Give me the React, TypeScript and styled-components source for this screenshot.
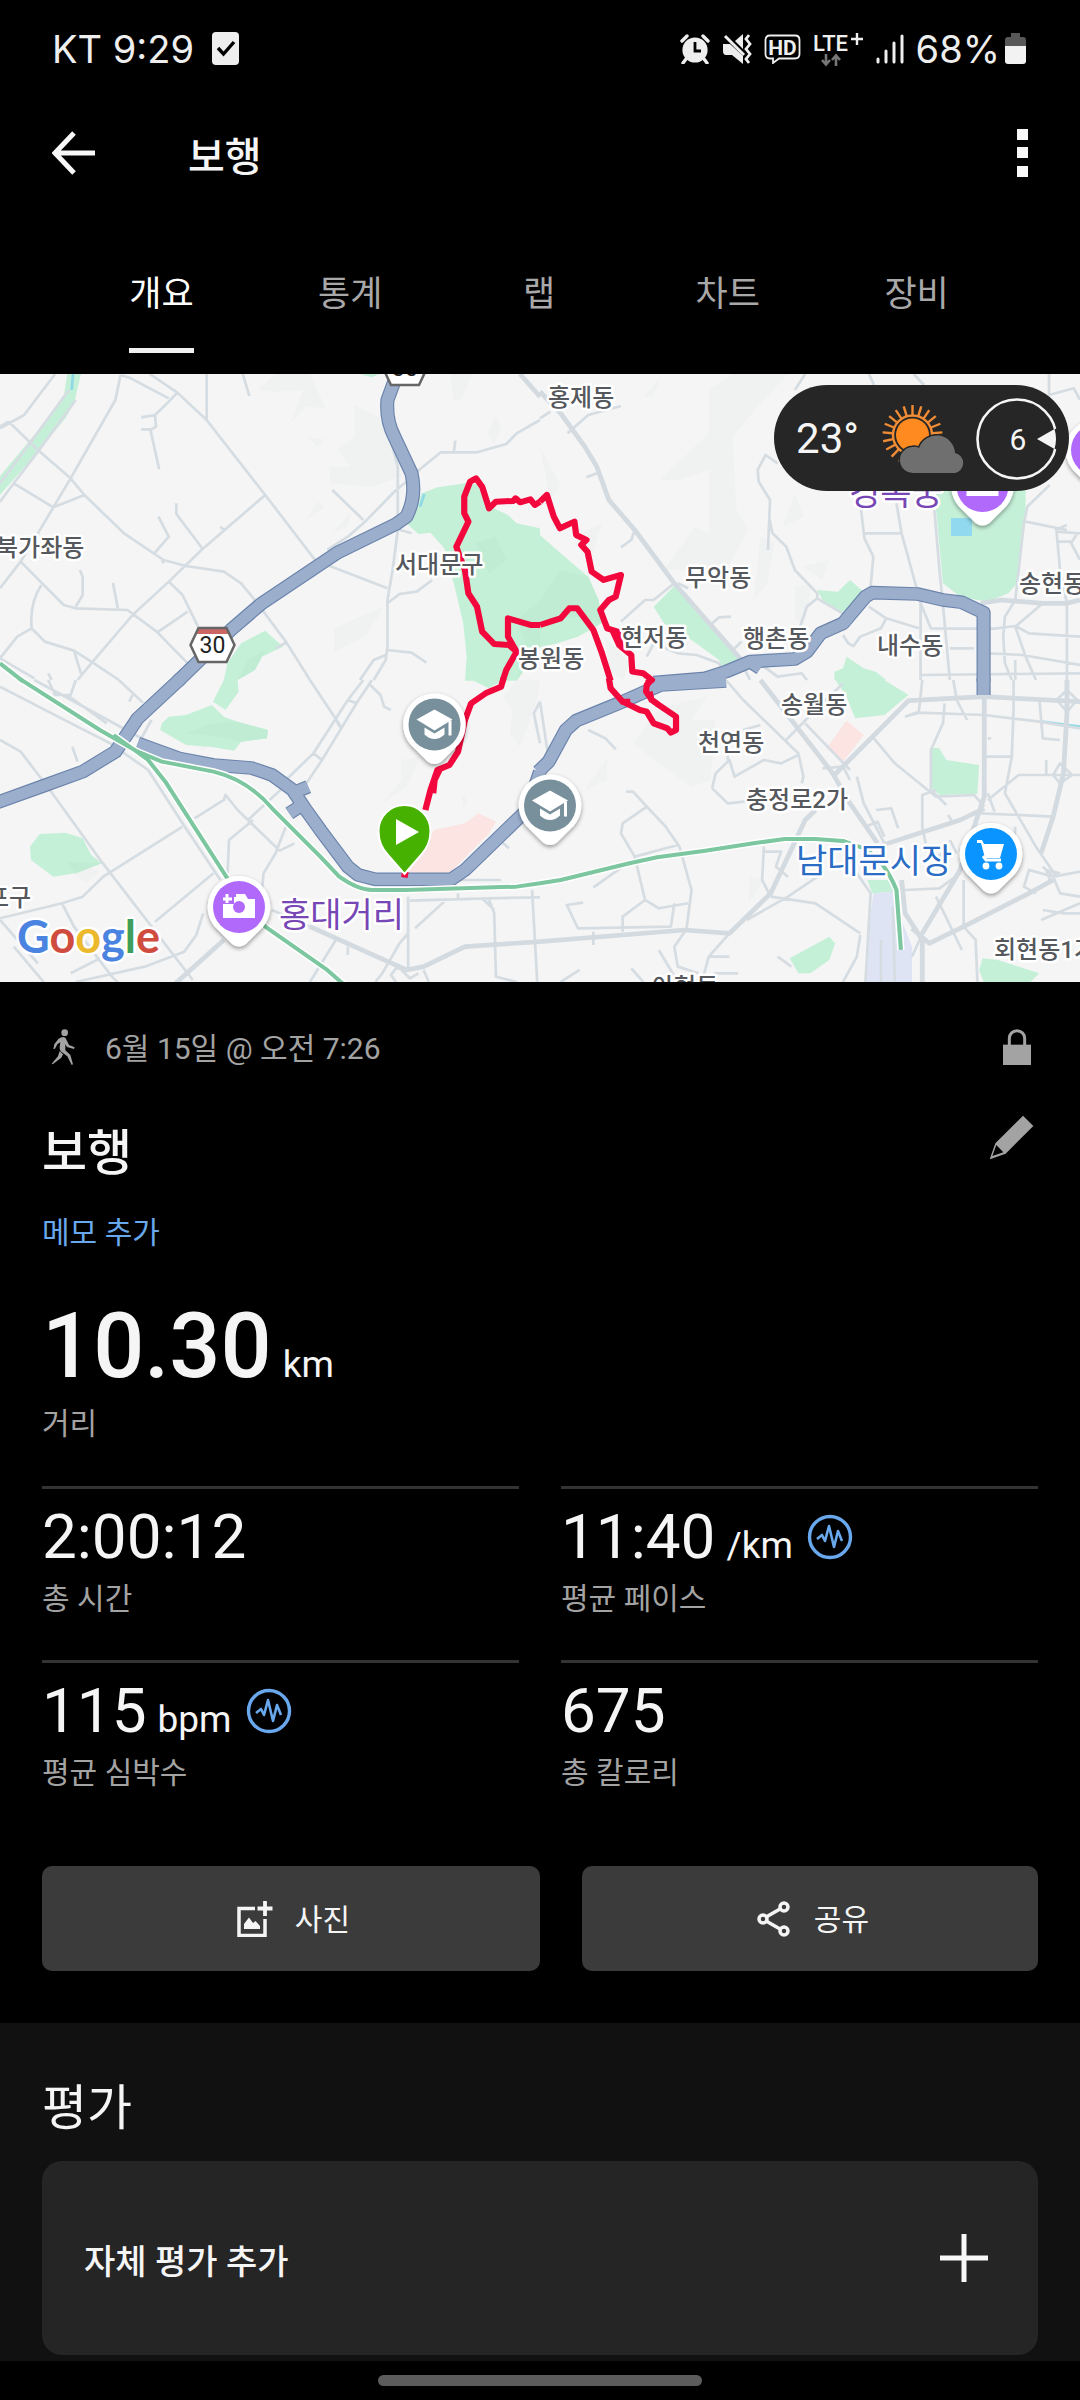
import React from "react";
import styled, { createGlobalStyle } from "styled-components";

const GlobalStyle = createGlobalStyle`
  * { box-sizing: border-box; }
  body {
    margin: 0;
    background: #000;
    color: #f5f5f5;
    font-family: Roboto, "Noto Sans CJK KR", sans-serif;
  }
  button {
    font: inherit;
    color: inherit;
    background: none;
    border: 0;
    padding: 0;
    cursor: pointer;
  }
  svg { display: block; flex: none; }
  h1, h2, p, dl, dd, dt { margin: 0; font-weight: 400; }
`;

/* ---------- Page chrome ---------- */

const Page = styled.div`
  display: flex;
  flex-direction: column;
  min-height: 100vh;
`;

const StatusBar = styled.div`
  display: flex;
  justify-content: space-between;
  align-items: center;
  height: 97px;
  padding: 0 54px 0 52px;
  color: #eee;
  font-family: Inter, Roboto, sans-serif;
  font-size: 38px;
  line-height: 48px;
`;

const StatusGroup = styled.div<{ $gap: number }>`
  display: flex;
  align-items: center;
  gap: ${(p) => p.$gap}px;
`;

const Battery = styled.span`
  display: flex;
  align-items: center;
  gap: 5px;
`;

const AppBar = styled.header`
  display: flex;
  align-items: center;
  height: 112px;
  padding: 0 52px;
`;

const AppTitle = styled.h1`
  flex: 1;
  margin-left: 92px;
  padding-top: 9px;
  font-size: 40px;
  font-weight: 500;
  line-height: 48px;
`;

const Tabs = styled.nav`
  display: flex;
  padding: 66px 69px 21px 67px;
`;

const Tab = styled.button<{ $active?: boolean }>`
  flex: 1;
  display: flex;
  justify-content: center;
  font-size: 35px;
  line-height: 40px;
  color: ${(p) => (p.$active ? "#fff" : "#a8a8a8")};
`;

const TabLabel = styled.span<{ $active?: boolean }>`
  padding-bottom: 33px;
  border-bottom: 5px solid ${(p) => (p.$active ? "#f0f0f0" : "transparent")};
`;

/* ---------- Map ---------- */

const MapFrame = styled.section`
  position: relative;
  height: 608px;
  overflow: hidden;
  background: #f5f5f5;
`;

const MapCanvas = styled.svg`
  width: 100%;
  height: 100%;
`;

const Place = styled.text`
  font-family: Roboto, "Noto Sans CJK KR", sans-serif;
  font-size: 24px;
  font-weight: 500;
  fill: #55585c;
  stroke: #fff;
  stroke-width: 5px;
  stroke-linejoin: round;
  paint-order: stroke;
`;

const PoiName = styled(Place)<{ $color: string }>`
  font-size: 34px;
  font-weight: 400;
  fill: ${(p) => p.$color};
`;

const ShieldText = styled.text`
  font-family: Roboto, sans-serif;
  font-size: 23px;
  fill: #222;
  text-anchor: middle;
`;

const GoogleMark = styled.text`
  font-family: Lato, sans-serif;
  font-size: 45px;
  font-weight: 700;
  stroke: #fff;
  stroke-width: 5px;
  stroke-linejoin: round;
  paint-order: stroke;
`;

const Weather = styled.div`
  position: absolute;
  top: 11px;
  right: 11px;
  display: flex;
  align-items: center;
  height: 106px;
  padding: 2px 10px 0 22px;
  border-radius: 53px;
  background: #262626;
  color: #f5f5f5;
  font-size: 42px;
  line-height: 48px;
`;

const SkyIcon = styled.svg`
  margin: 0 7px 0 19px;
`;

const WindText = styled.text`
  font-family: Roboto, sans-serif;
  font-size: 30px;
  fill: #f5f5f5;
  text-anchor: middle;
`;

/* ---------- Activity summary ---------- */

const Summary = styled.main`
  padding: 46px 42px 52px;
`;

const MetaRow = styled.div`
  display: flex;
  align-items: center;
  height: 40px;
  color: #a3a3a3;
`;

const DateText = styled.p`
  flex: 1;
  margin-left: 21px;
  padding-top: 2px;
  font-size: 30px;
  line-height: 40px;
`;

const TitleRow = styled.div`
  display: flex;
  justify-content: space-between;
  align-items: flex-start;
  margin-top: 47px;
  color: #a3a3a3;
`;

const Title = styled.h2`
  font-size: 49px;
  font-weight: 500;
  line-height: 78px;
  color: #f5f5f5;
`;

const NoteLink = styled.a`
  display: block;
  margin-top: 20px;
  font-size: 30px;
  line-height: 40px;
  color: #69a8ec;
  text-decoration: none;
`;

const Distance = styled.dl`
  display: flex;
  flex-direction: column-reverse;
  padding: 41px 0 42px;
`;

const StatGrid = styled.dl`
  display: grid;
  grid-template-columns: 1fr 1fr;
  column-gap: 42px;
`;

const StatCell = styled.div`
  display: flex;
  flex-direction: column-reverse;
  justify-content: flex-end;
  padding: 10px 0 41px;
  border-top: 3px solid #333;
`;

const StatValue = styled.dd<{ $large?: boolean }>`
  display: flex;
  align-items: center;
  gap: 14px;
  font-size: ${(p) => (p.$large ? 90 : 62)}px;
  font-weight: ${(p) => (p.$large ? 500 : 400)};
  line-height: ${(p) => (p.$large ? 106 : 76)}px;
`;

const Unit = styled.span`
  margin-left: 11px;
  font-size: 37px;
  font-weight: 400;
  line-height: 40px;
`;

const StatLabel = styled.dt`
  margin-top: 4px;
  font-size: 30px;
  line-height: 40px;
  color: #a3a3a3;
`;

const Actions = styled.div`
  display: flex;
  gap: 42px;
  margin-top: 32px;
`;

const ActionButton = styled.button<{ $grow: number }>`
  flex: ${(p) => p.$grow} 1 0;
  display: flex;
  justify-content: center;
  align-items: center;
  gap: 22px;
  height: 105px;
  padding: 0 0 0 5px;
  border-radius: 10px;
  background: #3b3b3b;
  font-size: 30px;
  line-height: 40px;
`;

const ActionLabel = styled.span`
  padding-top: 3px;
`;

/* ---------- Rating ---------- */

const Rating = styled.section`
  flex: 1;
  padding: 54px 42px 6px;
  background: #111;
`;

const RatingTitle = styled.h2`
  font-size: 49px;
  line-height: 64px;
`;

const RatingCard = styled.button`
  display: flex;
  justify-content: space-between;
  align-items: center;
  width: 100%;
  height: 194px;
  margin-top: 20px;
  padding: 0 42px;
  border-radius: 20px;
  background: #252525;
  font-size: 34px;
  font-weight: 500;
  line-height: 48px;
`;

const RatingPrompt = styled.span`
  padding-top: 7px;
`;

const GestureBar = styled.div`
  display: flex;
  justify-content: center;
  height: 39px;
  padding-top: 14px;
`;

const GestureHandle = styled.span`
  width: 30%;
  height: 11px;
  border-radius: 6px;
  background: #5c5c5c;
`;

/* ---------- Map data: four tiles, each drawn on a 1568 x 930 grid ---------- */

type Tile = {
  at: [number, number];
  hills: string;
  parks: string;
  parkShade?: string;
  pink?: string;
  station?: string;
  water?: string;
  streets: string;
  avenues: string;
  highway: string;
  rail: string;
  route: string;
};

const tiles: Tile[] = [
  {
    at: [0, -4],
    hills:
      "M750 60L800 12H900L945 115L890 110L845 160L880 60L800 65ZM1030 105L1100 140L1150 230L1165 320L1080 350L960 340L955 290L1020 290L980 240L1030 200ZM890 450L920 395L942 410ZM970 775L1115 710L1060 800L970 845ZM1310 12H1370L1340 90L1315 90ZM1440 135L1455 180L1435 220L1415 190ZM895 203L942 208L920 230ZM965 490L1020 425L1010 470Z",
    parks:
      "M195 12H235L215 100L190 145L110 245L0 375V318L85 213L150 130L185 80ZM1180 460L1225 370L1270 352L1350 340L1400 345L1425 410L1475 435L1500 460L1568 475V832L1500 932H1350L1355 860L1345 760L1320 650L1290 535L1250 488L1215 492ZM650 930L660 880L700 820L770 782L822 830L760 860L740 900L690 930ZM1045 12H1100L1080 22Z",
    parkShade:
      "M1500 932L1530 830L1500 750L1568 690V832ZM1380 520L1440 500L1470 570L1420 610ZM690 930L720 870L770 840L760 862L740 900Z",
    water: "M212 12L208 60M1232 372L1220 410",
    streets:
      "M160 12L70 135L0 175M350 15L335 90L205 325L155 412L110 490L60 575L0 655M25 155L110 240L205 325L245 375L360 490L475 570L540 588L650 605L700 640L740 690L830 815L900 930M350 15L380 25L490 85M435 12L515 68L600 150L770 375L915 570M515 68L490 95L450 135L410 142M450 135L453 170L440 178H410M437 180L462 298M600 12V150M705 12L724 78M40 340L155 412L245 375M770 375L585 540L490 635L385 735L265 880L225 930M460 440L490 500L450 548M512 400V432L587 535M60 575L185 705L220 715L370 720L455 785L545 880M232 600L240 620V675L220 710M328 638L342 715M490 635L530 675L575 770M545 725L460 785M120 645Q85 700 92 775L50 800L0 865M92 775L130 815L215 842L265 875L345 930M215 842L235 910M1568 150L1500 190L1470 222L1385 247H1280L1205 310M1322 212L1318 245M1180 335L1150 360L1060 455L1010 500L950 540M1130 190L1155 290V480L1140 600L1125 690V830L1120 870L1085 930M965 360L1055 450M950 585L1125 655M1155 478L1195 490M1125 700L1160 672L1210 665L1255 630M1125 840L1195 848L1238 878M1120 855L1085 870L1045 930M800 835L835 815M640 470L650 480M470 570L475 580M0 865L100 925M140 910L150 930M25 155L0 170M0 340L90 215L200 60M0 395L40 340L110 245L220 90",
    avenues: "M1510 12L1568 80",
    highway:
      "M1150 20L1125 90Q1120 150 1145 200L1195 310Q1210 380 1180 440L1150 462L980 548L760 700L670 780L515 935",
    rail: "M0 880L68 935",
    route:
      "M1460 932L1470 900L1500 845L1475 800V745L1540 765L1568 765M1500 845L1478 825L1435 822L1400 785L1385 710L1360 670L1350 600L1335 560L1325 530L1360 455L1348 430V380L1365 335L1382 325L1400 350L1420 415L1440 395L1490 393L1497 385L1510 397L1540 388L1553 405L1568 395",
  },
  {
    at: [540, -4],
    hills:
      "M350 330L490 190V60L560 12H720L640 100L560 200L570 420L605 480L540 600L360 600L450 470L490 490V300L400 330ZM740 370L765 440L705 470ZM760 590L840 570L820 630ZM300 80L350 20L330 80ZM0 230L60 345L30 390ZM100 500L180 460L150 560ZM640 500L680 520L660 640L620 690ZM740 650L790 640L770 760L740 750ZM190 800L260 880L240 930L200 900Z",
    parks:
      "M0 495L60 550L140 620L170 690L180 760L110 800L50 820L0 832ZM390 648L585 870L535 905L520 870L440 810L360 760L330 710ZM805 660L865 665L900 630L940 665L890 735L820 690ZM1150 350H1410V450L1385 640L1360 670L1300 695L1220 680L1170 640L1150 420ZM855 930V905L880 895L890 860L940 895L975 905L1005 930Z",
    parkShade: "M0 690L60 600L140 620L170 690L180 760L110 740L0 750Z",
    streets:
      "M235 108L140 135L80 190M0 145L30 125M165 310L135 322M275 480L265 510L235 532M400 640L430 655M390 640L330 690H305L235 755M310 860L330 820L400 850L455 855L520 880L535 910M500 760L520 742L555 740M770 12L740 60M690 280L655 255L632 300L635 335L668 390L662 540M665 440L675 490L715 530L740 600L805 670V685L885 735M805 685L775 710L755 770M955 12L970 45M1085 12L1115 45M1478 12V75L1550 55L1568 90M930 400L942 505L968 560L960 650M1035 400L1050 490L1095 660L1105 700V930M942 490H1050M1145 420L1160 600L1175 760L1190 930M1105 700L1135 775L1210 776H1320L1380 768L1420 790L1568 800M955 710L1005 745L1100 775M1005 745L990 775L930 800L910 828L895 820L880 795M1190 835H1260M1105 915L1568 910M1305 850L1400 855L1568 885M1480 345L1415 410L1405 460L1380 690L1350 740L1345 800L1350 880L1370 930M1410 455L1530 480M1568 490L1500 485L1510 600L1530 700V930M1500 515H1545L1560 490M1540 515L1568 570M1460 700L1380 770L1410 860L1440 930M585 880L610 930M650 890L690 920L760 910L775 930M560 840L585 815M1495 480L1530 465M1380 870V930",
    avenues:
      "M0 65L60 130L130 230L165 290L200 390L275 480L390 640L585 870M1280 700L1340 690L1460 700H1530L1568 690",
    highway:
      "M330 938L480 925L540 905L610 875L740 867L775 845L815 790L880 760L945 680L965 668L1095 672L1170 690L1225 697L1288 728V935M610 875L640 895M880 760L888 772",
    rail: "",
    route:
      "M0 395L20 375L40 440L58 475L100 455L105 495L135 510L120 525L138 545L150 605L185 630L235 615L220 680L200 690L175 720L195 775L225 785L235 830L265 855L268 905L300 910L325 930L310 940M210 780L232 830M0 765L30 755L60 745L85 715H108L155 780L180 850L205 932",
  },
  {
    at: [0, 306],
    hills:
      "M1165 240L1220 230L1180 320L1110 370L1165 300ZM1460 50L1500 0H1568L1560 60L1510 200L1480 160L1490 90ZM190 560L250 555L290 575L250 610ZM1340 340L1360 370L1345 380ZM570 200L620 190L590 210Z",
    parks:
      "M470 130L490 110L540 105L615 75L650 110L690 125L778 150L775 175L700 185L680 212L610 200L540 195L490 165L465 150ZM650 0H690L693 35L655 90L618 65ZM87 500L115 462L190 458L240 475L265 525L295 550L220 580L155 590L90 540ZM1370 0H1460L1420 25Z",
    parkShade:
      "M540 160L615 130L690 125L778 150L775 175L700 185L640 170ZM190 545L295 550L220 580Z",
    pink: "M1180 590L1260 450L1350 430L1390 400L1440 425L1420 460L1300 585Z",
    streets:
      "M0 180L60 215L145 330L295 545L455 760L560 900M345 0L415 68M385 45L375 65M210 200L225 245M0 20L150 100L320 190L430 270L530 430L640 600M140 0L160 45L205 45L220 0M100 0L420 180M195 45L310 130M440 120L405 185M900 0L990 140M1055 0L1010 60L910 220L830 300M1080 0L1035 70L935 240L890 310M1010 60L1035 70M975 120L990 145M910 220L935 240M1075 15L1105 45L1115 80L1135 90M565 415L650 360L655 345L690 390L812 512L855 490M735 420L665 480L660 600M825 320L720 420M830 440L800 520L765 580L760 640M530 440L300 590L240 650L180 670L0 715M180 670L215 740L325 890L345 910M40 800L130 910M620 580L450 725M205 880L300 830L330 810M0 720L110 850M220 906L420 860L535 815L570 765L590 700M1185 650V870M1205 745L1290 665M1190 662L1420 655L1568 652M1330 640V660M1420 660L1435 700L1440 890L1500 906M1545 630L1560 906M1185 870L1150 865L1135 885L1150 906M975 780L900 906M1185 760L1160 790L1110 880L1090 906M1010 800V825M1230 870L1245 906M1335 600H1455M1455 485L1478 505M1165 870L1190 895L1215 880M1400 655L1435 690M790 690L900 740M1568 65L1550 100L1568 190",
    avenues: "M650 780L510 910M900 740L1180 870L1230 860L1350 800L1568 785",
    highway:
      "M-10 368L125 318L240 275L335 215L400 115L525 -5M400 190L520 235L620 255L730 264L790 285L850 330L885 385L930 450L1010 560L1040 585L1090 598H1310L1350 570L1530 390L1568 275M860 335L895 320M870 380L840 400",
    rail:
      "M55 -5L290 150L400 215L470 245L620 275Q720 300 790 385L930 530L985 590Q1040 630 1080 630H1180L1500 620L1568 610M330 165L430 240L480 305L660 595L770 740L950 870L1000 915",
    route:
      "M1166 582L1185 585M1235 390L1250 330L1270 270L1305 255L1330 215L1350 120L1368 70L1410 40L1455 20L1462 -5M1258 340L1262 300L1280 262",
  },
  {
    at: [540, 306],
    hills:
      "M270 190L355 80L485 50L440 120L510 120L495 300L440 320L340 245ZM130 330L195 235V300ZM610 590L650 600L605 670Z",
    parks:
      "M858 0H1000L1070 45L1000 105L915 115L890 50ZM1135 205L1158 203L1180 240L1275 255L1270 342L1160 345L1137 325ZM950 600H1015L1030 635L965 640ZM725 835L840 770L857 790L840 840L785 880L750 880ZM1285 835L1330 840L1450 880L1420 910H1290L1275 870Z",
    pink: "M890 122L940 165L880 245L832 205Z",
    station: "M968 640L1025 635L1050 720L1080 800V910H945L955 740Z",
    water: "M1455 125L1568 140",
    streets:
      "M540 0L590 60L710 180L750 220L765 290L760 310M710 185L800 90L880 10M770 130L900 270M920 290L940 370L1000 490M965 170L1030 250L1150 350L1260 345L1290 380M1110 0L1100 95L1060 110M1060 110L1100 98L1290 105L1450 125L1568 145M1175 70L1170 130L1135 210V330L1180 375M1200 0L1210 60L1240 120M1375 0V90L1370 230H1295M1450 60L1460 175L1510 180M1300 175H1310M1370 230L1350 340L1440 500L1500 590M1568 285H1390L1300 360M1280 400L1490 410M1110 440V345L1150 330M250 335H270L310 380L240 430L235 460L275 530L305 660L345 685L430 670M310 380L365 440L405 500L440 630L425 750M275 530L400 495M305 660L240 710V755M155 622L240 560M125 668L78 675L110 745L380 740L390 670M650 500L645 600L665 640M650 515H700L685 560L720 590M550 760L490 830L470 906M420 755L390 800L400 860L460 880M670 650L800 670L930 760M600 720L720 650L820 580M930 765L920 830L880 906M920 580L960 640L945 906M990 780V906M1025 680L1030 906M1060 630L1160 625L1220 580M1150 650L1225 810M1230 600V740L1265 780L1270 906M1490 590L1568 575M1490 590L1420 570L1405 620L1440 640M1490 590L1510 640L1568 650M1490 590L1460 560M1480 600L1470 570L1510 580M1455 720L1568 670M1460 690L1520 700L1568 700M500 325L510 280L550 240L565 290L650 240L700 250L750 225M500 325L545 370L640 360M545 240V210M590 150L640 135M945 440L980 425L1000 470M975 390L1020 385L1040 445M140 150L190 175L220 208M265 865L300 906M345 810L400 906M490 830L550 830M505 880H575M690 830L730 860M1185 405L1200 430M1110 440L1120 490M1470 240V285M1380 440L1375 540L1360 550M1510 250L1545 285L1510 310L1490 285ZM1500 60L1530 30L1560 60L1530 95ZM0 65L25 235M60 906L115 870M155 755V795M820 265L880 260L900 300M1120 740L1080 830M1300 340L1320 395M1160 520L1170 560M1190 480L1210 520",
    avenues:
      "M640 0L850 280L900 370L980 490M850 290L1070 62L1290 50L1568 65M1290 50V350L1270 410L1220 570L1110 760M1530 0V100L1520 280L1490 410L1455 520M1290 385L1220 420L980 500M0 785L420 750L550 760L670 640L770 420L800 390M1050 600L1060 700L1110 780V906M1080 745L1130 790L1230 740L1420 640L1490 600",
    highway:
      "M-5 275L25 245L75 150L105 122L240 65L350 15L540 3M1288 -5V45",
    rail:
      "M0 610L60 600L260 550L340 532L480 512L620 490L710 477H800L880 483L940 505Q1000 540 1035 630L1048 810",
    route:
      "M325 -3L310 15L308 35L325 60L345 75L395 110V150L380 158L370 145L330 130L310 95L290 90L240 65L205 25L200 -5M318 35L325 65M235 65H262",
  },
];

const tileTransform = ([x, y]: [number, number]) =>
  `translate(${x} ${y}) scale(0.3444 0.3333)`;

type Stroke = { color: string; width: number };

function LineLayer({ pick, color, width }: { pick: (t: Tile) => string | undefined } & Stroke) {
  return (
    <g fill="none" stroke={color} strokeWidth={width} strokeLinejoin="round">
      {tiles.map((t) => (
        <path key={t.at.join()} transform={tileTransform(t.at)} d={pick(t) || ""} />
      ))}
    </g>
  );
}

function AreaLayer({ pick, color }: { pick: (t: Tile) => string | undefined; color: string }) {
  return (
    <g fill={color}>
      {tiles.map((t) => (
        <path key={t.at.join()} transform={tileTransform(t.at)} d={pick(t) || ""} />
      ))}
    </g>
  );
}

const places: [string, number, number][] = [
  ["홍제동", 548, 32],
  ["북가좌동", -4, 182],
  ["서대문구", 395, 199],
  ["무악동", 685, 212],
  ["현저동", 621, 272],
  ["봉원동", 518, 293],
  ["행촌동", 743, 273],
  ["내수동", 877, 280],
  ["송현동", 1019, 218],
  ["송월동", 781, 339],
  ["천연동", 698, 377],
  ["충정로2가", 746, 434],
  ["회현동1가", 994, 584],
  ["아현동", 652, 621],
  ["포구", -13, 532],
];

function Pin({ x, y, color, children }: { x: number; y: number; color: string; children?: React.ReactNode }) {
  return (
    <g transform={`translate(${x} ${y})`}>
      <path
        d="M0 -31A31 31 0 0 1 24 20L7 37Q0 42 -7 37L-24 20A31 31 0 0 1 0 -31Z"
        fill="#fff"
        filter="url(#pinShadow)"
      />
      <circle r="26" fill={color} />
      {children}
    </g>
  );
}

const SchoolGlyph = () => (
  <g fill="#fff">
    <path d="M0 -15L18 -5L0 6L-18 -5Z" />
    <path d="M-10 3L0 9L10 3V10Q0 19 -10 10Z" />
    <path d="M14 -4H17V11H14Z" />
  </g>
);

const CameraGlyph = () => (
  <g>
    <path d="M-3 -13H6L9 -8H16V11H-16V-3H-5V-10H-3Z" fill="#fff" />
    <circle cy="0" r="6" fill="#b069fb" />
    <path d="M-12 -13V-4M-16 -8H-7" stroke="#fff" strokeWidth="3" />
  </g>
);

const CartGlyph = () => (
  <g fill="#fff">
    <path d="M-14 -14H-9L-7 -10H13L9 4H-6L-10 -11H-14Z" />
    <path d="M-8 2L-5 6H10" fill="none" stroke="#fff" strokeWidth="3" />
    <circle cx="-5" cy="12" r="3.4" />
    <circle cx="8" cy="12" r="3.4" />
  </g>
);

const RouteShield = ({ x, y }: { x: number; y: number }) => (
  <g transform={`translate(${x} ${y})`}>
    <path d="M-14 -17H14L22 0L14 17H-14L-22 0Z" fill="#fff" />
    <path d="M-14 -17H14L17 -11H-17Z" fill="#cc6663" />
    <path d="M-14 -17H14L22 0L14 17H-14L-22 0Z" fill="none" stroke="#666" strokeWidth="2.5" />
    <ShieldText x="0" y="8">30</ShieldText>
  </g>
);

function RouteMap() {
  return (
    <MapCanvas viewBox="0 0 1080 608" preserveAspectRatio="xMidYMid slice" role="img" aria-label="활동 경로 지도">
      <defs>
        <filter id="pinShadow" x="-30%" y="-30%" width="160%" height="160%">
          <feDropShadow dx="0" dy="2" stdDeviation="2" floodOpacity="0.4" />
        </filter>
      </defs>
      <rect width="1080" height="608" fill="#f5f5f5" />
      <AreaLayer pick={(t) => t.hills} color="#f0f1f1" />
      <AreaLayer pick={(t) => t.parks} color="#c5f0d8" />
      <AreaLayer pick={(t) => t.parkShade} color="#bfecd2" />
      <AreaLayer pick={(t) => t.pink} color="#fbe4e2" />
      <AreaLayer pick={(t) => t.station} color="#dee4f4" />
      <LineLayer pick={(t) => t.water} color="#8fd9e6" width={8} />
      <rect x="951" y="144" width="21" height="18" fill="#91d9ee" />
      <LineLayer pick={(t) => t.streets} color="#d6dde2" width={8} />
      <LineLayer pick={(t) => t.avenues} color="#d3dae0" width={14} />
      <LineLayer pick={(t) => t.highway} color="#6c84ac" width={41} />
      <LineLayer pick={(t) => t.highway} color="#9bafcd" width={34} />
      <LineLayer pick={(t) => t.rail} color="#fff" width={21} />
      <LineLayer pick={(t) => t.rail} color="#7dc7a0" width={12} />
      <LineLayer pick={(t) => t.route} color="#f2083c" width={18} />

      <RouteShield x={212.5} y={271} />
      <RouteShield x={405} y={-6} />

      {places.map(([name, x, y]) => (
        <Place key={name} x={x} y={y}>{name}</Place>
      ))}
      <PoiName $color="#7747b5" x="849" y="131">경복궁</PoiName>
      <PoiName $color="#7747b5" x="279" y="553">홍대거리</PoiName>
      <PoiName $color="#2b6cc4" x="796" y="499">남대문시장</PoiName>

      <Pin x={434.5} y={350.5} color="#78909c"><SchoolGlyph /></Pin>
      <Pin x={550} y={431.5} color="#78909c"><SchoolGlyph /></Pin>
      <Pin x={991} y={480} color="#0a94ff"><CartGlyph /></Pin>
      <Pin x={239} y={533} color="#b069fb"><CameraGlyph /></Pin>
      <Pin x={982.5} y={112} color="#b069fb"><rect x="-16" y="-8" width="32" height="18" fill="#fff" /></Pin>
      <Pin x={1097} y={76} color="#b069fb" />

      <path
        d="M404.500 431A26 26 0 0 1 430.500 457Q430.500 471 421 481L404.500 500L388 481Q378.500 471 378.500 457A26 26 0 0 1 404.500 431Z"
        fill="#46b100"
        stroke="#fff"
        strokeWidth="2"
      />
      <path d="M396 445L419 458L396 471Z" fill="#fff" />

      <GoogleMark x="17" y="579">
        <tspan fill="#4a84e0">G</tspan>
        <tspan fill="#d04c3e">o</tspan>
        <tspan fill="#ecb92d">o</tspan>
        <tspan fill="#4a84e0">g</tspan>
        <tspan fill="#3f9f58">l</tspan>
        <tspan fill="#d04c3e">e</tspan>
      </GoogleMark>
    </MapCanvas>
  );
}

function WeatherBadge() {
  const rays = Array.from({ length: 16 }, (_, i) => 100 + i * 17);
  return (
    <Weather>
      <span>23°</span>
      <SkyIcon width="90" height="82" viewBox="878 397 90 82" aria-hidden="true">
        <g stroke="#f08c35" strokeWidth="2.4">
          {rays.map((deg) => {
            const a = (deg * Math.PI) / 180;
            const c = Math.cos(a);
            const s = Math.sin(a);
            return <line key={deg} x1={912.5 + 20 * c} y1={434 + 20 * s} x2={912.5 + 30 * c} y2={434 + 30 * s} />;
          })}
        </g>
        <circle cx="912.5" cy="434" r="19.5" fill="#262626" stroke="#f08c35" strokeWidth="2.4" />
        <circle cx="912.5" cy="434" r="16.5" fill="#ff8a1f" />
        <path
          d="M914 472A13 13 0 0 1 912 446Q916 445 919 447A18.500 18.500 0 0 1 955 452A10.200 10.200 0 0 1 955 472Z"
          fill="#6f6f6f"
          stroke="#262626"
          strokeWidth="3"
          paintOrder="stroke"
        />
      </SkyIcon>
      <svg width="84" height="84" viewBox="-42 -42 84 84" role="img" aria-label="풍속 6">
        <circle r="39.500" fill="none" stroke="#f5f5f5" strokeWidth="2.6" />
        <path d="M20 0L42 -12V12Z" fill="#262626" />
        <path d="M20 0L37.500 -10Q40.500 0 37.500 10Z" fill="#f5f5f5" />
        <WindText x="1" y="11">6</WindText>
      </svg>
    </Weather>
  );
}

/* ---------- Icons ---------- */

const CheckBoxIcon = () => (
  <svg width="27" height="33" viewBox="0 0 27 33" aria-hidden="true">
    <rect width="27" height="33" rx="4" fill="#eee" />
    <path d="M6 16L11.500 22L22 10" fill="none" stroke="#000" strokeWidth="3.4" />
  </svg>
);

const AlarmIcon = () => (
  <svg width="30" height="30" viewBox="0 0 30 30" aria-hidden="true">
    <circle cx="15" cy="16" r="12.600" fill="#eee" />
    <path d="M2 7L7 2M28 7L23 2M6 25L3 29M24 25L27 29" stroke="#eee" strokeWidth="3.4" strokeLinecap="round" />
    <path d="M15 8V17H21" fill="none" stroke="#000" strokeWidth="2.8" />
  </svg>
);

const MuteIcon = () => (
  <svg width="30" height="30" viewBox="0 0 30 30" aria-hidden="true">
    <path d="M1 10H8L21 22V30L10 21H4Q1 21 1 17ZM13 7L21 0V15Z" fill="#eee" />
    <path d="M3 2L22 21" stroke="#eee" strokeWidth="3" />
    <path d="M27 1L24 5L28 10L24 15L28 20L24 25L27 29" fill="none" stroke="#eee" strokeWidth="2.8" />
  </svg>
);

const HdText = styled.text`
  font-family: Roboto, sans-serif;
  font-size: 21px;
  font-weight: 700;
  fill: #eee;
  text-anchor: middle;
`;

const HdIcon = () => (
  <svg width="37" height="30" viewBox="0 0 37 30" aria-hidden="true">
    <path
      d="M6 1.500H31Q35.500 1.500 35.500 6V20Q35.500 24.500 31 24.500H15L9 29V24.500H6Q1.500 24.500 1.500 20V6Q1.500 1.500 6 1.500Z"
      fill="none"
      stroke="#eee"
      strokeWidth="1.8"
    />
    <HdText x="18.500" y="20.500">HD</HdText>
  </svg>
);

const LteText = styled.text`
  font-family: Roboto, sans-serif;
  font-size: 22px;
  font-weight: 500;
  fill: #eee;
`;

const LteIcon = () => (
  <svg width="51" height="40" viewBox="0 -4 51 40" aria-hidden="true">
    <LteText x="0" y="18">LTE</LteText>
    <path d="M44 0V12M38 6H50" stroke="#eee" strokeWidth="2.4" />
    <path d="M13 21V31M9 27L13 31.500L17 27M23 33V23M19 27L23 22.500L27 27" fill="none" stroke="#777" strokeWidth="2.600" />
  </svg>
);

const SignalIcon = () => (
  <svg width="28" height="30" viewBox="0 0 28 30" aria-hidden="true">
    <path d="M2 25V28M10 17V28M18 9V28M26 2V28" stroke="#eee" strokeWidth="3" strokeLinecap="round" />
  </svg>
);

const BatteryIcon = () => (
  <svg width="21" height="31" viewBox="0 0 21 31" aria-hidden="true">
    <path d="M6 0H15V4H18Q21 4 21 7V14H0V7Q0 4 3 4H6Z" fill="#585858" />
    <path d="M0 13H21V28Q21 31 18 31H3Q0 31 0 28Z" fill="#f2f2f2" />
  </svg>
);

const BackIcon = () => (
  <svg width="44" height="44" viewBox="0 0 44 44" aria-hidden="true">
    <path d="M22 2L3 22L22 42M3 22H43" fill="none" stroke="#f8f8f8" strokeWidth="5" />
  </svg>
);

const MoreIcon = () => (
  <svg width="11" height="48" viewBox="0 0 11 48" aria-hidden="true">
    <path d="M0 0H11V11H0ZM0 18H11V29H0ZM0 37H11V48H0Z" fill="#f8f8f8" />
  </svg>
);

const WalkIcon = () => (
  <svg width="42" height="42" viewBox="36 36 126 126" fill="currentColor" aria-hidden="true">
    <circle cx="104" cy="53" r="10" />
    <path d="M85 72Q92 66 101 66Q108 67 110 76L117 90L134 97L132 102L111 96L106 88L106 106L121 120L129 148L125 150L112 124L92 109Q88 104 89 95L91 82L82 88L75 101L70 102L73 88Z" />
    <path d="M89 108L99 118L94 128L68 148L65 146L84 124Z" />
  </svg>
);

const LockIcon = () => (
  <svg width="42" height="42" viewBox="108 36 126 126" aria-hidden="true">
    <path d="M148 92V70A23 23 0 0 1 194 70V92" fill="none" stroke="currentColor" strokeWidth="9" />
    <path d="M129 89H213V150H129Z" fill="currentColor" />
  </svg>
);

const PencilIcon = () => (
  <svg width="48" height="48" viewBox="90 300 144 144" fill="currentColor" aria-hidden="true">
    <path fillRule="evenodd" d="M189 302L220 333L137 416L89 433L106 385ZM109 390L97 423L130 412Z" />
  </svg>
);

const PulseIcon = () => (
  <svg width="46" height="46" viewBox="-23 -23 46 46" fill="none" stroke="#69a8ec" role="img" aria-label="그래프 보기">
    <circle r="20.500" strokeWidth="3.400" />
    <path d="M-13 2L-8 -2L-5 4L-1 -11L4 10L8 -6L12 4" strokeWidth="2.600" strokeLinejoin="round" />
  </svg>
);

const PhotoAddIcon = () => (
  <svg width="36" height="36" viewBox="0 0 36 36" aria-hidden="true">
    <path d="M18 7.500H2V34.500H28V18" fill="none" stroke="#f5f5f5" strokeWidth="3.500" />
    <path d="M28 0V15M20.500 7.500H35.500" stroke="#f5f5f5" strokeWidth="3.800" />
    <path d="M7 28V23L12 16.500L16 22L18.500 20L23 25V28Z" fill="#f5f5f5" />
  </svg>
);

const ShareIcon = () => (
  <svg width="36" height="36" viewBox="0 0 36 36" fill="none" stroke="#f5f5f5" strokeWidth="3.500" aria-hidden="true">
    <path d="M11 15.500L24 8M11 20.500L24 28" />
    <circle cx="7" cy="18" r="4" />
    <circle cx="28" cy="6" r="4" />
    <circle cx="28" cy="30" r="4" />
  </svg>
);

const PlusIcon = () => (
  <svg width="64" height="64" viewBox="0 0 64 64" aria-hidden="true">
    <path d="M32 8V56M8 32H56" stroke="#f8f8f8" strokeWidth="5" />
  </svg>
);

/* ---------- Page ---------- */

const tabNames = ["개요", "통계", "랩", "차트", "장비"];

const stats: { label: string; value: string; unit?: string; chart?: boolean }[] = [
  { label: "총 시간", value: "2:00:12" },
  { label: "평균 페이스", value: "11:40", unit: "/km", chart: true },
  { label: "평균 심박수", value: "115", unit: "bpm", chart: true },
  { label: "총 칼로리", value: "675" },
];

export default function App() {
  const [tab, setTab] = React.useState(tabNames[0]);

  return (
    <Page>
      <GlobalStyle />
      <StatusBar>
        <StatusGroup $gap={18}>
          <span>KT 9:29</span>
          <CheckBoxIcon />
        </StatusGroup>
        <StatusGroup $gap={12}>
          <AlarmIcon />
          <MuteIcon />
          <HdIcon />
          <LteIcon />
          <SignalIcon />
          <Battery>
            <span>68%</span>
            <BatteryIcon />
          </Battery>
        </StatusGroup>
      </StatusBar>

      <AppBar>
        <button type="button" aria-label="뒤로"><BackIcon /></button>
        <AppTitle>보행</AppTitle>
        <button type="button" aria-label="더보기"><MoreIcon /></button>
      </AppBar>

      <Tabs>
        {tabNames.map((name) => (
          <Tab key={name} type="button" $active={name === tab} onClick={() => setTab(name)}>
            <TabLabel $active={name === tab}>{name}</TabLabel>
          </Tab>
        ))}
      </Tabs>

      <MapFrame>
        <RouteMap />
        <WeatherBadge />
      </MapFrame>

      <Summary>
        <MetaRow>
          <WalkIcon />
          <DateText>6월 15일 @ 오전 7:26</DateText>
          <LockIcon />
        </MetaRow>
        <TitleRow>
          <Title>보행</Title>
          <button type="button" aria-label="제목 편집"><PencilIcon /></button>
        </TitleRow>
        <NoteLink href="#note">메모 추가</NoteLink>

        <Distance>
          <StatLabel>거리</StatLabel>
          <StatValue $large>
            <span>10.30<Unit>km</Unit></span>
          </StatValue>
        </Distance>

        <StatGrid>
          {stats.map((s) => (
            <StatCell key={s.label}>
              <StatLabel>{s.label}</StatLabel>
              <StatValue>
                <span>
                  {s.value}
                  {s.unit && <Unit>{s.unit}</Unit>}
                </span>
                {s.chart && <PulseIcon />}
              </StatValue>
            </StatCell>
          ))}
        </StatGrid>

        <Actions>
          <ActionButton type="button" $grow={498}>
            <PhotoAddIcon />
            <ActionLabel>사진</ActionLabel>
          </ActionButton>
          <ActionButton type="button" $grow={456}>
            <ShareIcon />
            <ActionLabel>공유</ActionLabel>
          </ActionButton>
        </Actions>
      </Summary>

      <Rating>
        <RatingTitle>평가</RatingTitle>
        <RatingCard type="button">
          <RatingPrompt>자체 평가 추가</RatingPrompt>
          <PlusIcon />
        </RatingCard>
      </Rating>

      <GestureBar>
        <GestureHandle />
      </GestureBar>
    </Page>
  );
}
